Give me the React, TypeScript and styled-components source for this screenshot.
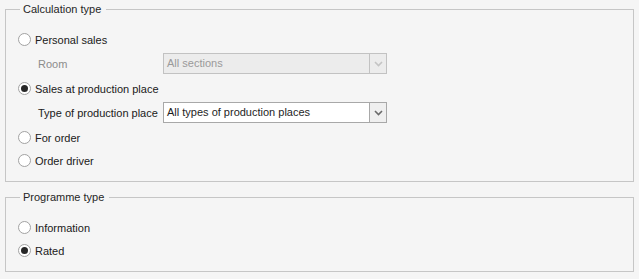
import React, { useState } from 'react'
import styled, { createGlobalStyle, css } from 'styled-components'

const GlobalStyle = createGlobalStyle`
  html, body {
    margin: 0;
    padding: 0;
    background: #f5f5f5;
  }
  body {
    font-family: 'Liberation Sans', Arial, sans-serif;
    font-size: 11px;
    color: #202020;
  }
`

const Page = styled.div`
  display: flex;
  flex-direction: column;
  gap: 8px;
  padding: 2px 5px;
  width: 639px;
  height: 279px;
  box-sizing: border-box;
`

const Group = styled.fieldset`
  margin: 0;
  min-width: 0;
  border: 1px solid #c6c6c6;
  padding: 12px 12px 9px 12px;
  display: flex;
  flex-direction: column;
`

const Caption = styled.legend`
  margin-left: 2px;
  padding: 0 5px 0 3px;
  line-height: 14px;
  font-size: 11px;
  color: #262626;
`

const RadioRow = styled.label`
  display: flex;
  align-items: center;
  gap: 4px;
  height: 23px;
  cursor: default;
  font-size: 11px;
  white-space: nowrap;
`

const RadioCircle = styled.span<{ checked: boolean }>`
  width: 13px;
  height: 13px;
  box-sizing: border-box;
  border-radius: 50%;
  border: 1px solid #a2a2a2;
  background: #ffffff;
  display: flex;
  align-items: center;
  justify-content: center;
  flex: none;
  ${({ checked }) =>
    checked &&
    css`
      &::after {
        content: '';
        width: 7px;
        height: 7px;
        border-radius: 50%;
        background: #262626;
      }
    `}
`

const FieldRow = styled.div`
  display: flex;
  align-items: center;
  height: 21px;
  margin: 2px 0 3px 20px;
`

const FieldLabel = styled.span<{ disabled?: boolean }>`
  width: 125px;
  flex: none;
  white-space: nowrap;
  font-size: 11px;
  color: ${({ disabled }) => (disabled ? '#8c8c8c' : '#202020')};
`

const Combo = styled.div<{ disabled?: boolean }>`
  width: 224px;
  height: 21px;
  box-sizing: border-box;
  display: flex;
  border: 1px solid ${({ disabled }) => (disabled ? '#c2c2c2' : '#a8a8a8')};
  background: ${({ disabled }) => (disabled ? '#ececec' : '#ffffff')};
`

const ComboText = styled.span<{ disabled?: boolean }>`
  flex: 1;
  padding-left: 3px;
  line-height: 19px;
  font-size: 11px;
  color: ${({ disabled }) => (disabled ? '#9a9a9a' : '#1e1e1e')};
  white-space: nowrap;
  overflow: hidden;
`

const ComboButton = styled.span<{ disabled?: boolean }>`
  width: 16px;
  display: flex;
  align-items: center;
  justify-content: center;
  border-left: 1px solid ${({ disabled }) => (disabled ? '#c2c2c2' : '#a8a8a8')};
  background: ${({ disabled }) => (disabled ? '#ececec' : '#efefef')};
  color: ${({ disabled }) => (disabled ? '#c4c4c4' : '#6a6a6a')};
`

const Chevron = () => (
  <svg width="9" height="6" viewBox="0 0 9 6">
    <path d="M1 1 L4.5 4.5 L8 1" fill="none" stroke="currentColor" strokeWidth="1.6" />
  </svg>
)

const Radio = ({ label, checked, onSelect }: { label: string; checked: boolean; onSelect: () => void }) => (
  <RadioRow onClick={onSelect}>
    <RadioCircle checked={checked} />
    {label}
  </RadioRow>
)

const ComboField = ({ label, value, disabled }: { label: string; value: string; disabled?: boolean }) => (
  <FieldRow>
    <FieldLabel disabled={disabled}>{label}</FieldLabel>
    <Combo disabled={disabled}>
      <ComboText disabled={disabled}>{value}</ComboText>
      <ComboButton disabled={disabled}>
        <Chevron />
      </ComboButton>
    </Combo>
  </FieldRow>
)

const App = () => {
  const [calc, setCalc] = useState('production')
  const [prog, setProg] = useState('rated')

  return (
    <>
      <GlobalStyle />
      <Page>
        <Group>
          <Caption>Calculation type</Caption>
          <Radio label="Personal sales" checked={calc === 'personal'} onSelect={() => setCalc('personal')} />
          <ComboField label="Room" value="All sections" disabled={calc !== 'personal'} />
          <Radio
            label="Sales at production place"
            checked={calc === 'production'}
            onSelect={() => setCalc('production')}
          />
          <ComboField
            label="Type of production place"
            value="All types of production places"
            disabled={calc !== 'production'}
          />
          <Radio label="For order" checked={calc === 'order'} onSelect={() => setCalc('order')} />
          <Radio label="Order driver" checked={calc === 'driver'} onSelect={() => setCalc('driver')} />
        </Group>
        <Group>
          <Caption>Programme type</Caption>
          <Radio label="Information" checked={prog === 'info'} onSelect={() => setProg('info')} />
          <Radio label="Rated" checked={prog === 'rated'} onSelect={() => setProg('rated')} />
        </Group>
      </Page>
    </>
  )
}

export default App
